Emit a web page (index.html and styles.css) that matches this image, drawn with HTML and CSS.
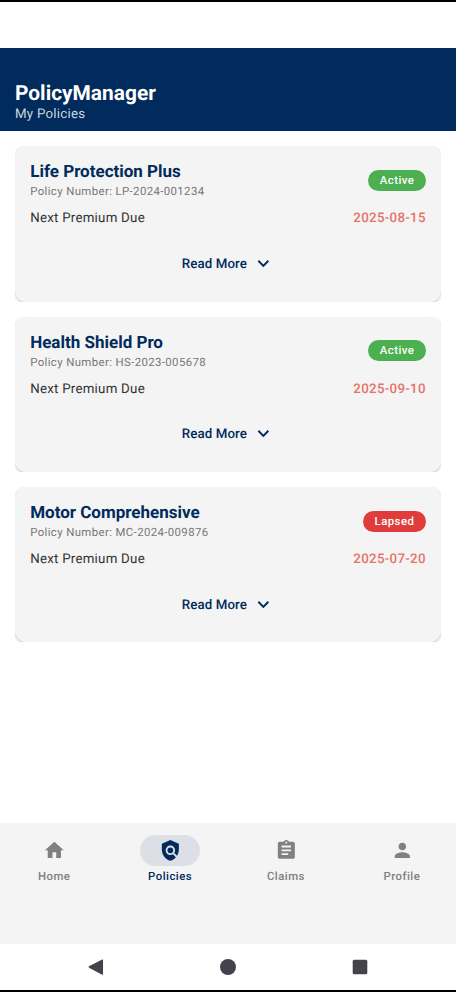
FILE: index.html
```html
<!DOCTYPE html>
<html lang="en">
<head>
<meta charset="utf-8">
<title>PolicyManager</title>
<link rel="stylesheet" href="styles.css">
</head>
<body>
<div class="screen">
  <div class="status-bar"></div>
  <header class="header">
    <h1 class="app-title">PolicyManager</h1>
    <p class="subtitle">My Policies</p>
  </header>
  <main class="list">
    <div class="clip"><article class="card">
      <div class="top"><div><h2 class="name">Life Protection Plus</h2><p class="number">Policy Number: LP-2024-001234</p></div><span class="badge active">Active</span></div>
      <div class="due"><span class="due-label">Next Premium Due</span><span class="date">2025-08-15</span></div>
      <div class="more"><span class="more-label">Read More</span><svg class="chevron" viewBox="0 0 24 24"><path d="M7.41 8.59 12 13.17l4.59-4.58L18 10l-6 6-6-6z"/></svg></div>
    </article></div>
    <div class="clip"><article class="card">
      <div class="top"><div><h2 class="name">Health Shield Pro</h2><p class="number">Policy Number: HS-2023-005678</p></div><span class="badge active">Active</span></div>
      <div class="due"><span class="due-label">Next Premium Due</span><span class="date">2025-09-10</span></div>
      <div class="more"><span class="more-label">Read More</span><svg class="chevron" viewBox="0 0 24 24"><path d="M7.41 8.59 12 13.17l4.59-4.58L18 10l-6 6-6-6z"/></svg></div>
    </article></div>
    <div class="clip"><article class="card">
      <div class="top"><div><h2 class="name">Motor Comprehensive</h2><p class="number">Policy Number: MC-2024-009876</p></div><span class="badge lapsed">Lapsed</span></div>
      <div class="due"><span class="due-label">Next Premium Due</span><span class="date">2025-07-20</span></div>
      <div class="more"><span class="more-label">Read More</span><svg class="chevron" viewBox="0 0 24 24"><path d="M7.41 8.59 12 13.17l4.59-4.58L18 10l-6 6-6-6z"/></svg></div>
    </article></div>
  </main>
  <nav class="tabs">
    <div class="tab"><span class="pill"><svg class="icon" viewBox="0 0 24 24"><path d="M10 20v-6h4v6h5v-8h3L12 3 2 12h3v8z"/></svg></span><span>Home</span></div>
    <div class="tab selected"><span class="pill"><svg class="icon" viewBox="0 0 24 24"><path d="M21 5l-9-4-9 4v6c0 5.55 3.84 10.74 9 12 2.3-.56 4.33-1.9 5.88-3.71l-3.12-3.12c-1.94 1.29-4.58 1.07-6.29-.64-1.95-1.95-1.95-5.12 0-7.07 1.95-1.95 5.12-1.95 7.07 0 1.71 1.71 1.92 4.35.64 6.29l2.9 2.9C20.29 15.69 21 13.38 21 11z"/><circle cx="12" cy="12" r="3"/></svg></span><span>Policies</span></div>
    <div class="tab"><span class="pill"><svg class="icon" viewBox="0 0 24 24"><path d="M19 3h-4.18C14.4 1.84 13.3 1 12 1s-2.4.84-2.82 2H5c-1.1 0-2 .9-2 2v14c0 1.1.9 2 2 2h14c1.1 0 2-.9 2-2V5c0-1.1-.9-2-2-2zm-7 0c.55 0 1 .45 1 1s-.45 1-1 1-1-.45-1-1 .45-1 1-1zm2 14H7v-2h7v2zm3-4H7v-2h10v2zm0-4H7V7h10v2z"/></svg></span><span>Claims</span></div>
    <div class="tab"><span class="pill"><svg class="icon" viewBox="0 0 24 24"><path d="M12 12c2.21 0 4-1.79 4-4s-1.79-4-4-4-4 1.79-4 4 1.79 4 4 4zm0 2c-2.67 0-8 1.34-8 4v2h16v-2c0-2.66-5.33-4-8-4z"/></svg></span><span>Profile</span></div>
  </nav>
  <div class="system-bar">
    <svg class="key" viewBox="0 0 16 16"><path d="M15 .8v14.4q0 .8-.8.5L1 8.7Q.2 8 1 7.3L14.2.4q.8-.3.8.4z"/></svg>
    <svg class="key" viewBox="0 0 16 16"><circle cx="8" cy="8" r="8"/></svg>
    <svg class="key" viewBox="0 0 16 16"><rect x=".7" y=".8" width="14.6" height="14.4" rx="1.5"/></svg>
  </div>
</div>
</body>
</html>
```
FILE: styles.css
```css
* { box-sizing: border-box; }
body { margin: 0; font-family: Roboto, "Liberation Sans", sans-serif; background: #fff; text-rendering: geometricPrecision; }
h1, h2, p { margin: 0; }
.screen { height: 992px; display: flex; flex-direction: column; border-top: 2px solid #000; border-bottom: 2px solid #000; overflow: hidden; }
.status-bar { height: 45.6px; flex: none; }
.header { height: 83.4px; flex: none; background: #002b5c; padding: 33px 15px 0; }
.app-title { font-size: 20.9px; line-height: 26px; font-weight: 700; color: #fff; }
.subtitle { font-size: 13.3px; line-height: 15px; letter-spacing: .24px; color: #ccd5de; }
.list { flex: 1; padding: 15.4px 15px 0; display: flex; flex-direction: column; gap: 15.2px; }
.clip { height: 155.2px; flex: none; overflow: hidden; }
.card { height: 100%; background: #f4f4f4; border-radius: 11px; padding: 15px 15.2px; box-shadow: 0 1px 3px rgba(0,0,0,.25); }
.top { display: flex; justify-content: space-between; align-items: center; height: 38px; }
.name { font-size: 17px; line-height: 21px; margin-top: 2px; font-weight: 700; color: #002b5c; }
.number { font-size: 11.4px; line-height: 17px; letter-spacing: .38px; color: #777; }
.badge { height: 21px; border-radius: 11px; padding: 0 11.4px; font-size: 11.4px; line-height: 21px; font-weight: 500; letter-spacing: .47px; color: #fff; }
.active { background: #4caf50; }
.lapsed { background: #e03c3c; }
.due { display: flex; justify-content: space-between; margin-top: 10px; font-size: 13.3px; line-height: 19px; letter-spacing: .24px; }
.due-label { color: #333; }
.date { color: #e57368; font-weight: 500; letter-spacing: .3px; }
.more { display: flex; justify-content: center; align-items: center; gap: 4.5px; margin-top: 23.5px; height: 23px; color: #002b5c; font-size: 13.3px; font-weight: 500; letter-spacing: .1px; }
.more-label { padding-top: 2.4px; }
.chevron { width: 22.7px; height: 22.7px; fill: currentColor; }
.tabs { height: 121px; flex: none; background: #f4f4f4; display: flex; gap: 7.6px; padding-top: 12px; }
.tab { flex: 1; display: flex; flex-direction: column; align-items: center; font-size: 11.4px; line-height: 15px; font-weight: 500; letter-spacing: .47px; color: #808080; }
.pill { width: 60.6px; height: 30.6px; border-radius: 16px; display: flex; align-items: center; justify-content: center; margin-bottom: 3px; }
.selected { color: #002b5c; }
.selected .pill { background: #dce0e6; }
.icon { width: 22.7px; height: 22.7px; fill: currentColor; }
.system-bar { height: 46px; flex: none; background: #fff; display: flex; justify-content: center; align-items: center; gap: 116px; }
.key { width: 16px; height: 16px; fill: #43434d; }
```
